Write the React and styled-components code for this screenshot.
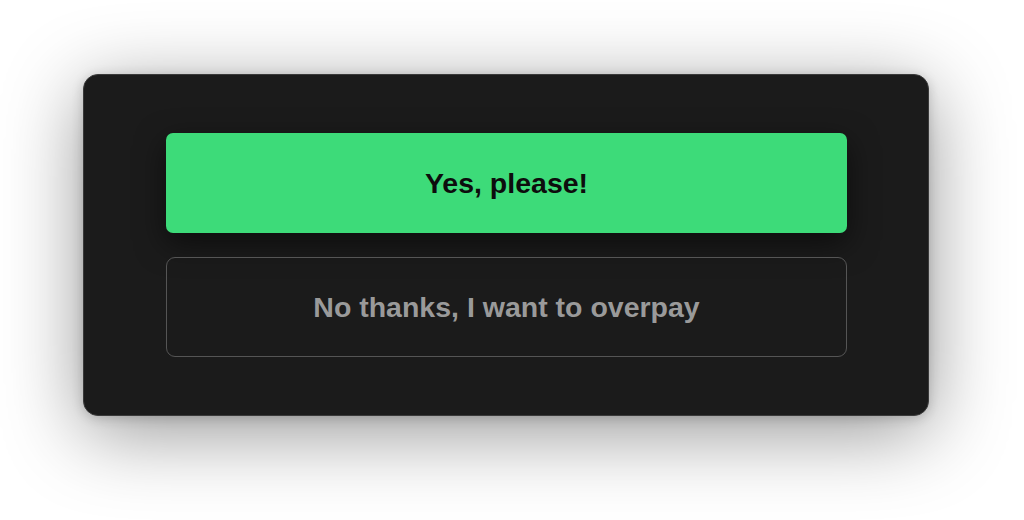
import React from "react";
import styled, { createGlobalStyle } from "styled-components";

const Global = createGlobalStyle`
  html, body { margin: 0; padding: 0; background: #ffffff; }
  body { font-family: "Liberation Sans", Arial, sans-serif; }
`;

const Page = styled.div`
  width: 1024px;
  height: 520px;
  box-sizing: border-box;
  padding: 74px 0 0 83px;
  overflow: hidden;
`;

const Card = styled.div`
  width: 846px;
  height: 342px;
  box-sizing: border-box;
  background: #1b1b1b;
  border: 1px solid #3a3a3a;
  border-radius: 15px;
  box-shadow: 0 16px 80px rgba(0, 0, 0, 0.42), 0 2px 12px rgba(0, 0, 0, 0.18);
  padding: 58px 81px 0 82px;
  display: flex;
  flex-direction: column;
  gap: 24px;
`;

const Button = styled.button`
  height: 100px;
  width: 100%;
  box-sizing: border-box;
  display: flex;
  align-items: center;
  justify-content: center;
  font-family: "Liberation Sans", Arial, sans-serif;
  font-weight: 700;
  font-size: 28.5px;
  cursor: pointer;
  border-radius: ${(p) => (p.$primary ? "7px" : "9px")};
  background: ${(p) => (p.$primary ? "#3ddb79" : "transparent")};
  color: ${(p) => (p.$primary ? "#0d0d0d" : "#9a9a9a")};
  border: ${(p) => (p.$primary ? "none" : "1px solid #555555")};
  box-shadow: ${(p) => (p.$primary ? "0 10px 30px rgba(0,0,0,0.55)" : "none")};
`;

export default function App() {
  return (
    <>
      <Global />
      <Page>
        <Card>
          <Button $primary>Yes, please!</Button>
          <Button>No thanks, I want to overpay</Button>
        </Card>
      </Page>
    </>
  );
}
